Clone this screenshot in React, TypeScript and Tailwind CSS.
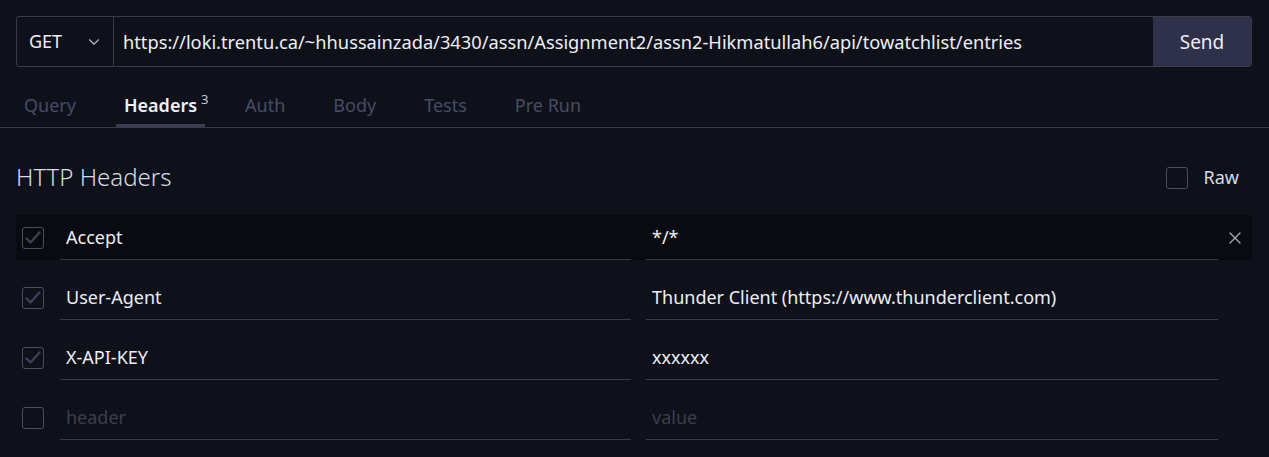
import { ChevronDown, X } from "lucide-react";

const tabs = [
  { label: "Query" },
  { label: "Headers", count: 3, active: true },
  { label: "Auth" },
  { label: "Body" },
  { label: "Tests" },
  { label: "Pre Run" },
];

const headers = [
  { key: "Accept", value: "*/*", checked: true, hover: true },
  { key: "User-Agent", value: "Thunder Client (https://www.thunderclient.com)", checked: true },
  { key: "X-API-KEY", value: "xxxxxx", checked: true },
  { key: "", value: "", checked: false },
];

function Check({ checked }: { checked: boolean }) {
  return (
    <div className="w-[22px] h-[22px] rounded-[3px] border border-[#4b4d58] flex items-center justify-center">
      {checked && (
        <svg width="18" height="18" viewBox="0 0 18 18" fill="none">
          <path d="M2.5 9.5l4 4 9-10" stroke="#3d4058" strokeWidth="2.4" strokeLinecap="round" strokeLinejoin="round" />
        </svg>
      )}
    </div>
  );
}

export default function App() {
  return (
    <div className="w-[1269px] h-[457px] bg-[#0f111a] text-[#eceef3] overflow-hidden" style={{ fontFamily: '"Noto Sans", "Open Sans", sans-serif' }}>
      <div className="pt-4 px-4 pr-[17px]">
        <div className="flex h-[51px] border border-[#3a3b45] rounded-[3px] overflow-hidden">
          <div className="w-[97px] flex items-center justify-between pl-3 pr-2.5 border-r border-[#3a3b45] text-[18px]">
            <span>GET</span>
            <ChevronDown size={18} strokeWidth={1.5} className="text-[#b8bac4]" />
          </div>
          <div className="flex-1 flex items-center pl-[9px] text-[18.25px] whitespace-nowrap">
            https://loki.trentu.ca/~hhussainzada/3430/assn/Assignment2/assn2-Hikmatullah6/api/towatchlist/entries
          </div>
          <div className="w-[98px] bg-[#2f3049] flex items-center justify-center text-[19px] -my-px rounded-r-[3px] pt-px">
            Send
          </div>
        </div>
      </div>

      <div className="flex h-[61px] pl-4 border-b border-[#3a3b45] text-[18px]">
        {tabs.map((t) => (
          <div
            key={t.label}
            className={`relative px-2 mr-[32px] flex items-center pt-[19px] border-b-[3px] ${t.active ? "text-[#eef0f5] font-semibold border-[#3b3c55]" : "text-[#474c66] border-transparent"}`}
          >
            {t.label}
            {t.count && (
              <span className="absolute left-full -ml-1 top-[23px] text-[13px] font-normal text-[#c6c8d4]">{t.count}</span>
            )}
          </div>
        ))}
      </div>

      <div className="flex items-start justify-between pl-4 pr-[30px] h-[87px] pt-[36px]">
        <div className="text-[24px] leading-[26px] font-light text-[#d8dae2]">HTTP Headers</div>
        <div className="flex items-center gap-4">
          <Check checked={false} />
          <span className="text-[18px] text-[#d8dae2]">Raw</span>
        </div>
      </div>

      <div className="px-4 pr-[17px]">
        {headers.map((h, i) => (
          <div key={i} className={`flex items-center h-[45px] mb-[15px] ${h.hover ? "bg-[#0a0b10]" : ""}`}>
            <div className="w-[44px] pl-1.5 flex items-center">
              <Check checked={h.checked} />
            </div>
            <div className="w-[571px] h-full flex items-center px-1.5 border-b border-[#3a3b45] text-[18px]">
              {h.key || <span className="text-[#3c3f4d]">header</span>}
            </div>
            <div className="w-[15px]" />
            <div className="w-[572px] h-full flex items-center px-1.5 border-b border-[#3a3b45] text-[18px]">
              {h.value || <span className="text-[#3c3f4d]">value</span>}
            </div>
            <div className="flex-1 flex items-center justify-end pr-[7px]">
              {h.hover && <X size={20} strokeWidth={1.5} className="text-[#a8aab4]" />}
            </div>
          </div>
        ))}
      </div>
    </div>
  );
}
